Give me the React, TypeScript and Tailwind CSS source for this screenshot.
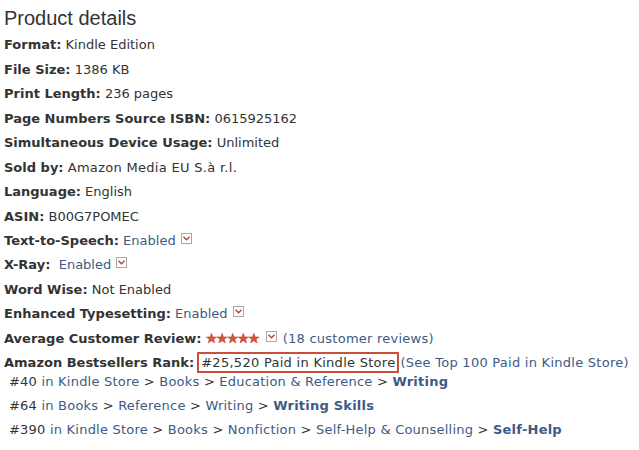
import React from "react";

const LINK = "text-[#3d5b84]";

function Pop() {
  return (
    <span className="inline-flex items-center justify-center w-[11px] h-[11px] border border-[#a8a8a8] bg-white align-top ml-[5px] mt-[2px]">
      <svg width="7" height="5" viewBox="0 0 7 5">
        <path d="M0.5 0.8 L3.5 3.8 L6.5 0.8" fill="none" stroke="#c0392b" strokeWidth="1.3" />
      </svg>
    </span>
  );
}

function Stars() {
  const star = "M5.5 0.3 L6.9 3.9 L10.7 4 L7.7 6.3 L8.8 10 L5.5 7.8 L2.2 10 L3.3 6.3 L0.3 4 L4.1 3.9 Z";
  return (
    <svg width="54" height="11" viewBox="0 0 54 11" className="inline-block align-[-1px]">
      {[0, 1, 2, 3, 4].map((i) => (
        <path key={i} d={star} transform={`translate(${i * 10.6} 0)`} fill="#d2553f" stroke="#b8402c" strokeWidth="0.5" />
      ))}
    </svg>
  );
}

function Row({ label, children }: { label: string; children?: React.ReactNode }) {
  return (
    <div className="h-[24.45px] flex items-center whitespace-nowrap">
      <span>
        <b className="font-bold text-[#333]">{label}</b> {children}
      </span>
    </div>
  );
}

export default function App() {
  return (
    <div className="w-[639px] h-[450px] bg-white overflow-hidden pl-[4px] text-[13px] text-[#333]" style={{ fontFamily: '"DejaVu Sans", Verdana, sans-serif' }}>
      <h2 className="text-[20px] leading-[24px] pt-[6px] pb-[3px] text-[#333] font-normal" style={{ fontFamily: '"Liberation Sans", Arial, sans-serif' }}>
        Product details
      </h2>
      <Row label="Format:">Kindle Edition</Row>
      <Row label="File Size:">1386 KB</Row>
      <Row label="Print Length:">236 pages</Row>
      <Row label="Page Numbers Source ISBN:">0615925162</Row>
      <Row label="Simultaneous Device Usage:">Unlimited</Row>
      <Row label="Sold by:"><span className="tracking-[0.3px]">Amazon Media EU S.à r.l.</span></Row>
      <Row label="Language:">English</Row>
      <Row label="ASIN:">B00G7POMEC</Row>
      <Row label="Text-to-Speech:">
        <span className={LINK}>Enabled</span>
        <Pop />
      </Row>
      <Row label="X-Ray:">
        &nbsp;<span className={LINK}>Enabled</span>
        <Pop />
      </Row>
      <Row label="Word Wise:">Not Enabled</Row>
      <Row label="Enhanced Typesetting:">
        <span className={LINK}>Enabled</span>
        <Pop />
      </Row>
      <Row label="Average Customer Review:">
        <Stars />
        <span className="ml-[1px]"><Pop /></span>{" "}
        <span className={`${LINK} ml-[2px] tracking-[0.24px]`}>(18 customer reviews)</span>
      </Row>
      <div className="h-[24.45px] flex items-center whitespace-nowrap">
        <b className="font-bold">Amazon Bestsellers Rank:</b>
        <span className="ml-[3px] border-2 border-[#c9503a] px-[2px] leading-[17px] tracking-[0.28px]">#25,520 Paid in Kindle Store</span>
        <span className={`${LINK} ml-[1px] tracking-[0.26px]`}>(See Top 100 Paid in Kindle Store)</span>
      </div>
      <div className="pl-[5px] -mt-[6px] tracking-[0.22px]">
        <div className="h-[24.45px] flex items-center whitespace-nowrap">
          #40&nbsp;<span className={LINK}>in Kindle Store</span>&nbsp;&gt;&nbsp;<span className={LINK}>Books</span>&nbsp;&gt;&nbsp;<span className={LINK}>Education &amp; Reference</span>&nbsp;&gt;&nbsp;<b className={LINK}>Writing</b>
        </div>
        <div className="h-[24.45px] flex items-center whitespace-nowrap">
          #64&nbsp;<span className={LINK}>in Books</span>&nbsp;&gt;&nbsp;<span className={LINK}>Reference</span>&nbsp;&gt;&nbsp;<span className={LINK}>Writing</span>&nbsp;&gt;&nbsp;<b className={LINK}>Writing Skills</b>
        </div>
        <div className="h-[24.45px] flex items-center whitespace-nowrap">
          #390&nbsp;<span className={LINK}>in Kindle Store</span>&nbsp;&gt;&nbsp;<span className={LINK}>Books</span>&nbsp;&gt;&nbsp;<span className={LINK}>Nonfiction</span>&nbsp;&gt;&nbsp;<span className={LINK}>Self-Help &amp; Counselling</span>&nbsp;&gt;&nbsp;<b className={LINK}>Self-Help</b>
        </div>
      </div>
    </div>
  );
}
